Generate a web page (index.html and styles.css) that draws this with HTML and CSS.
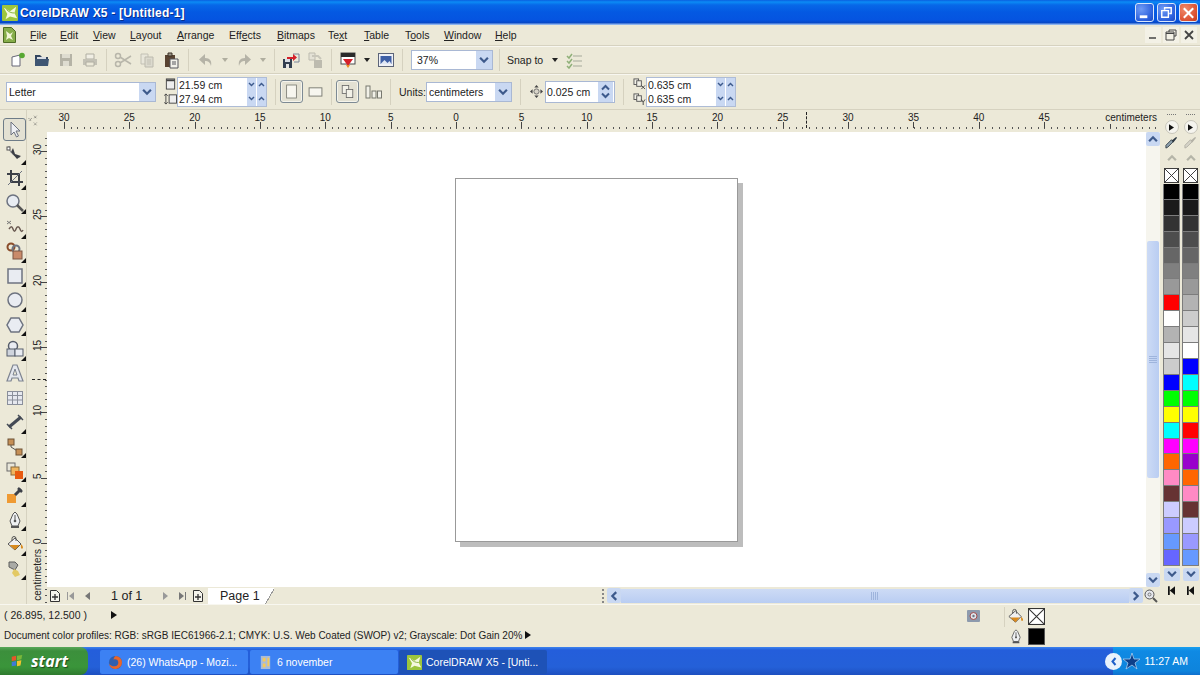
FILE: index.html
```html
<!DOCTYPE html>
<html lang="en">
<head>
  <meta charset="UTF-8" />
  <title>CorelDRAW X5 - [Untitled-1]</title>
  <link rel="stylesheet" href="styles.css">
</head>
<body>
  <svg class="defs" width="0" height="0">
    <symbol id="chev-d" viewBox="0 0 9 7"><path d="M1 1.500l3.500 3.500 3.500-3.500" fill="none" stroke="#3d5a8c" stroke-width="2"/></symbol>
    <symbol id="chev-u" viewBox="0 0 9 7"><path d="M1 5.500l3.500-3.500 3.500 3.500" fill="none" stroke="#3d5a8c" stroke-width="2"/></symbol>
    <symbol id="chev-l" viewBox="0 0 7 9"><path d="M5.500 1l-3.500 3.500 3.500 3.500" fill="none" stroke="#3d5a8c" stroke-width="2"/></symbol>
    <symbol id="chev-r" viewBox="0 0 7 9"><path d="M1.500 1l3.500 3.500-3.500 3.500" fill="none" stroke="#3d5a8c" stroke-width="2"/></symbol>
    <symbol id="cross" viewBox="0 0 16 16"><rect x=".5" y=".5" width="15" height="15" fill="#fff" stroke="#333"/><path d="M1 1l14 14M15 1L1 15" stroke="#333"/></symbol>
    <symbol id="bucket" viewBox="0 0 18 18"><path d="M2 9l7-6 6 6-6 6z" fill="#f0f0f0" stroke="#555"/><path d="M3.500 10h10L9 15z" fill="#d98a1e"/><path d="M6 6V3.500a2 2 0 0 1 4 0V6" fill="none" stroke="#555"/><path d="M15.500 9.500c1.500 2 2 3 1 4s-2-.5-1.500-4z" fill="#d98a1e"/></symbol>
    <symbol id="pen" viewBox="0 0 14 18"><path d="M7 1l2 2 3 7-2 5H4l-2-5 3-7z" fill="#eef0f2" stroke="#555"/><path d="M7 4v5" stroke="#555"/><circle cx="7" cy="10" r="1.300" fill="#555"/><path d="M3 16h8" stroke="#555" stroke-width="2"/></symbol>
    <symbol id="logo" viewBox="0 0 18 18"><rect width="18" height="18" rx="1" fill="#9cc53d"/><path d="M2 3l7 4 7-5-2 7 3 6-8-2-5 3 2-6z" fill="#f4f8dc"/><path d="M5 5c3 3 5 4 9 4" fill="none" stroke="#7dab2c"/></symbol>
  </svg>

  <header class="titlebar">
    <svg class="title-logo"><use href="#logo"/></svg>
    <span class="title-text">CorelDRAW X5 - [Untitled-1]</span>
    <div class="win-btns">
      <button class="win-btn"><svg viewBox="0 0 18 19"><rect x="4" y="12" width="8" height="3" fill="#fff"/></svg></button>
      <button class="win-btn"><svg viewBox="0 0 18 19"><path d="M7 6V4h7v6h-2M4 7h7v7H4z" fill="none" stroke="#fff" stroke-width="1.500"/></svg></button>
      <button class="win-btn close"><svg viewBox="0 0 18 19"><path d="M4 4.500l10 10M14 4.500l-10 10" stroke="#fff" stroke-width="2.200"/></svg></button>
    </div>
  </header>

  <nav class="menubar">
    <svg class="doc-icon" viewBox="0 0 13 16"><path d="M.5.5h8l4 4v11H.5z" fill="#86ad4a" stroke="#4d6b24"/><path d="M3 4l4 3 3-2-2 4 2 4-4-2-3 2 1-4z" fill="#f2f6d8"/></svg>
    <ul class="menu">
      <li class="m-file"><u>F</u>ile</li>
      <li class="m-edit"><u>E</u>dit</li>
      <li class="m-view"><u>V</u>iew</li>
      <li class="m-layout"><u>L</u>ayout</li>
      <li class="m-arrange"><u>A</u>rrange</li>
      <li class="m-effects">Eff<u>e</u>cts</li>
      <li class="m-bitmaps"><u>B</u>itmaps</li>
      <li class="m-text">Te<u>x</u>t</li>
      <li class="m-table"><u>T</u>able</li>
      <li class="m-tools">T<u>o</u>ols</li>
      <li class="m-window"><u>W</u>indow</li>
      <li class="m-help"><u>H</u>elp</li>
    </ul>
    <div class="doc-btns">
      <svg viewBox="0 0 16 16"><path d="M4 11h7" stroke="#444" stroke-width="1.500"/></svg>
      <svg viewBox="0 0 16 16"><path d="M6 5V3h7v6h-2M3 5h8v8H3zM3 6.500h8" fill="none" stroke="#444"/></svg>
      <svg viewBox="0 0 16 16"><path d="M4 4l8 8M12 4l-8 8" stroke="#444" stroke-width="1.800"/></svg>
    </div>
  </nav>

  <div class="toolbar">
    <span class="tb"><svg viewBox="0 0 18 18"><path d="M3 6l8-2v11H3z" fill="#fff" stroke="#667"/><circle cx="13" cy="4.500" r="2.800" fill="#58a832"/></svg></span>
    <span class="tb"><svg viewBox="0 0 18 18"><path d="M2 4h5l2 2h6v3H2z" fill="#33455e"/><path d="M2 8h14l-1 7H2z" fill="#3f5673"/><path d="M4 6h9v2H4z" fill="#d9dde3"/></svg></span>
    <span class="tb"><svg viewBox="0 0 18 18"><rect x="3" y="3" width="12" height="12" fill="#b5b3a6"/><rect x="5" y="3" width="8" height="4" fill="#dedcd0"/><rect x="6" y="10" width="6" height="5" fill="#dedcd0"/></svg></span>
    <span class="tb"><svg viewBox="0 0 18 18"><path d="M5 3h8v5H5z" fill="#f0eee4" stroke="#b0aea2"/><path d="M2 8h14v6H2z" fill="#c3c1b5"/><path d="M5 11h8v4H5z" fill="#ece9d8" stroke="#b0aea2"/></svg></span>
    <i class="sep"></i>
    <span class="tb"><svg viewBox="0 0 18 18"><circle cx="4" cy="5" r="2.500" fill="none" stroke="#b8b6aa" stroke-width="1.500"/><circle cx="4" cy="13" r="2.500" fill="none" stroke="#b8b6aa" stroke-width="1.500"/><path d="M6 6l11 7M6 12l11-7" stroke="#b8b6aa" stroke-width="1.500"/></svg></span>
    <span class="tb"><svg viewBox="0 0 18 18"><path d="M3 3h7v10H3z" fill="#e8e6da" stroke="#c2c0b4"/><path d="M7 6h8v10H7z" fill="#dcdace" stroke="#bcbaae"/><path d="M9 9h4M9 11h4M9 13h4" stroke="#c2c0b4"/></svg></span>
    <span class="tb"><svg viewBox="0 0 18 18"><path d="M3 4h10v12H3z" fill="#594331"/><path d="M6 2h4v3H6z" fill="#9b9588" stroke="#3d3024"/><path d="M8 8h8v9H8z" fill="#f2f1ea" stroke="#56575c"/><path d="M10 11h4M10 13h4" stroke="#56575c"/></svg></span>
    <i class="sep wide"></i>
    <span class="tb"><svg viewBox="0 0 18 18"><path d="M14 15c1-5-1-8-6-8V3L2 8.500 8 14v-4c3 0 5 1 6 5z" fill="#b5b3a7"/></svg></span>
    <span class="dd off"></span>
    <span class="tb"><svg viewBox="0 0 18 18"><path d="M4 15C3 10 5 7 10 7V3l6 5.500L10 14v-4c-3 0-5 1-6 5z" fill="#b5b3a7"/></svg></span>
    <span class="dd off"></span>
    <i class="sep"></i>
    <span class="tb"><svg viewBox="0 0 18 18"><rect x="1" y="8" width="9" height="9" fill="#333f50"/><rect x="3" y="8" width="5" height="3" fill="#d9dde3"/><rect x="4" y="13" width="3" height="4" fill="#e4e4e4"/><path d="M11 3h6v8h-5" fill="none" stroke="#7a8699"/><path d="M5 6h6V3l4 3.500-4 3.500V8H5z" fill="#d4202a"/></svg></span>
    <span class="tb"><svg viewBox="0 0 18 18"><path d="M3 2h6v7H3z" fill="#e4e2d6" stroke="#bdbbaf"/><rect x="8" y="9" width="8" height="8" fill="#bdbbaf"/><path d="M6 5h6l3 3" fill="none" stroke="#c8c6ba" stroke-width="2"/></svg></span>
    <i class="sep"></i>
    <span class="tb"><svg viewBox="0 0 18 18"><rect x="2" y="2" width="14" height="11" fill="#fff" stroke="#4a4a4a"/><rect x="2" y="2" width="14" height="4" fill="#2a2a2a"/><path d="M4 8h10l-5 7z" fill="#d5202a"/><path d="M7 14h4l-2 3z" fill="#ef8a1e"/></svg></span>
    <span class="dd"></span>
    <span class="tb"><svg viewBox="0 0 18 18"><rect x="1.500" y="2.500" width="15" height="13" fill="#eef0f6" stroke="#5c6478"/><rect x="3.500" y="5" width="11" height="8" fill="#3e5fa5"/><path d="M3.500 13l4-4 3 3 2-2 2 3z" fill="#dfe6f4"/></svg></span>
    <i class="sep before-zoom"></i>
    <div class="combo zoom-combo"><span>37%</span><b class="combo-btn"><svg><use href="#chev-d"/></svg></b></div>
    <i class="sep after-zoom"></i>
    <span class="snap">Snap to</span>
    <span class="dd snap-dd"></span>
    <span class="tb"><svg viewBox="0 0 18 18"><path d="M2 5l2 2 3-4M2 10l2 2 3-4M2 15l2 2 3-4" fill="none" stroke="#8fb078" stroke-width="1.500"/><path d="M8 5h9M8 10h9M8 15h9" stroke="#a5a99a"/></svg></span>
  </div>

  <div class="propbar">
    <div class="combo letter"><span>Letter</span><b class="combo-btn"><svg><use href="#chev-d"/></svg></b></div>
    <div class="size-icons">
      <svg viewBox="0 0 12 13"><rect x="1.500" y="1" width="9" height="11" fill="#eee" stroke="#444"/><path d="M1.500 2.500h9" stroke="#444" stroke-width="2"/></svg>
      <svg viewBox="0 0 14 13"><path d="M2 1v11" stroke="#444"/><path d="M0 3l2-2 2 2M0 10l2 2 2-2" fill="none" stroke="#444"/><rect x="5.500" y="2" width="8" height="9" fill="#eee" stroke="#444"/></svg>
    </div>
    <div class="spin-pair">
      <div class="spin-row"><span>21.59 cm</span><b><svg><use href="#chev-d"/></svg></b><b><svg><use href="#chev-u"/></svg></b></div>
      <div class="spin-row"><span>27.94 cm</span><b><svg><use href="#chev-d"/></svg></b><b><svg><use href="#chev-u"/></svg></b></div>
    </div>
    <i class="sep tall"></i>
    <span class="pb on"><svg viewBox="0 0 16 18"><rect x="2" y="1" width="12" height="16" fill="#f7f6ef" stroke="#77786f"/></svg></span>
    <span class="pb land"><svg viewBox="0 0 16 12"><rect x="1" y="2" width="14" height="9" fill="#f7f6ef" stroke="#77786f"/></svg></span>
    <i class="sep tall"></i>
    <span class="pb on"><svg viewBox="0 0 16 18"><rect x="1.500" y="1.500" width="8" height="10" fill="#f2f1e8" stroke="#666"/><rect x="6.500" y="6.500" width="8" height="10" fill="#f2f1e8" stroke="#666"/></svg></span>
    <span class="pb align"><svg viewBox="0 0 17 14"><rect x="1" y="1" width="4" height="12" fill="#f2f1e8" stroke="#77786f"/><rect x="7" y="6" width="4" height="7" fill="#f2f1e8" stroke="#77786f"/><rect x="12.500" y="6" width="4" height="7" fill="#f2f1e8" stroke="#77786f"/></svg></span>
    <i class="sep tall"></i>
    <label class="units-label">Units:</label>
    <div class="combo units"><span>centimeters</span><b class="combo-btn"><svg><use href="#chev-d"/></svg></b></div>
    <i class="sep tall"></i>
    <svg class="nudge" viewBox="0 0 15 15"><path d="M7.500 0l2.500 3H5zM7.500 15l2.500-3H5zM0 7.500L3 5v5zM15 7.500L12 5v5z" fill="#444"/><circle cx="7.500" cy="7.500" r="3" fill="#d8d4c8" stroke="#666"/></svg>
    <div class="nudge-box"><span>0.025 cm</span><b><svg><use href="#chev-u"/></svg><svg><use href="#chev-d"/></svg></b></div>
    <i class="sep tall"></i>
    <div class="size-icons dup-icons">
      <svg viewBox="0 0 14 13"><rect x="1" y="1" width="5" height="6" fill="#f2f1e8" stroke="#555"/><rect x="4" y="3" width="5" height="6" fill="#f2f1e8" stroke="#555"/><path d="M9 8l4 4M13 8l-4 4" stroke="#444"/></svg>
      <svg viewBox="0 0 14 13"><rect x="1" y="1" width="5" height="6" fill="#f2f1e8" stroke="#555"/><rect x="4" y="3" width="5" height="6" fill="#f2f1e8" stroke="#555"/><path d="M9 7l2 3 2-3M11 10v3" fill="none" stroke="#444"/></svg>
    </div>
    <div class="spin-pair">
      <div class="spin-row"><span>0.635 cm</span><b><svg><use href="#chev-d"/></svg></b><b><svg><use href="#chev-u"/></svg></b></div>
      <div class="spin-row"><span>0.635 cm</span><b><svg><use href="#chev-d"/></svg></b><b><svg><use href="#chev-u"/></svg></b></div>
    </div>
  </div>

  <main class="workspace">
    <aside class="toolbox">
      <span class="tool selected"><svg viewBox="0 0 18 18"><path d="M5 1v13l3-3 2.500 5 2-1-2.500-5h4z" fill="#eef0f4" stroke="#6d7380"/></svg></span>
      <span class="tool fly"><svg viewBox="0 0 18 18"><path d="M3 1c0 6 4 10 11 11" fill="none" stroke="#7d8088"/><path d="M7 3l2 6 6 2-4 3-6-7z" fill="#3a3d44"/><rect x="1" y="2" width="3" height="3" fill="#fff" stroke="#555"/></svg></span>
      <span class="tool fly"><svg viewBox="0 0 18 18"><path d="M5 1v12h12M1 5h12v12" fill="none" stroke="#3c4048" stroke-width="2"/><path d="M2 16L16 2" stroke="#6d7380"/></svg></span>
      <span class="tool fly"><svg viewBox="0 0 18 18"><circle cx="7" cy="7" r="6" fill="#e8ecf2" stroke="#6d7380" stroke-width="1.500"/><path d="M11 11l6 6" stroke="#555" stroke-width="2.500"/></svg></span>
      <span class="tool fly"><svg viewBox="0 0 18 18"><path d="M1 3l4 3M5 3L1 6" stroke="#777"/><path d="M3 11c2-3 3-3 4 0s2 3 3 0 3-3 4 0 2 3 3 1" fill="none" stroke="#6a5a52" stroke-width="1.500"/></svg></span>
      <span class="tool fly"><svg viewBox="0 0 18 18"><circle cx="5" cy="5" r="3.500" fill="none" stroke="#8a4c2a" stroke-width="2"/><circle cx="10" cy="7" r="3.500" fill="none" stroke="#6d7380" stroke-width="2"/><rect x="7" y="9" width="9" height="8" fill="#c98a6a" stroke="#7a5644"/></svg></span>
      <span class="tool fly"><svg viewBox="0 0 18 18"><rect x="2" y="2" width="14" height="14" fill="#e9ecf2" stroke="#6d7380" stroke-width="1.500"/></svg></span>
      <span class="tool fly"><svg viewBox="0 0 18 18"><circle cx="9" cy="9" r="7" fill="#e9ecf2" stroke="#6d7380" stroke-width="1.500"/></svg></span>
      <span class="tool fly"><svg viewBox="0 0 18 18"><path d="M5 2h8l4 7-4 7H5L1 9z" fill="#e9ecf2" stroke="#6d7380" stroke-width="1.500"/></svg></span>
      <span class="tool fly"><svg viewBox="0 0 18 18"><circle cx="7" cy="6" r="4.500" fill="#e9ecf2" stroke="#555c6a" stroke-width="1.500"/><rect x="1" y="9" width="8" height="7" fill="#cfd4dd" stroke="#555c6a"/><rect x="9" y="9" width="8" height="7" fill="#e9ecf2" stroke="#555c6a"/></svg></span>
      <span class="tool"><svg viewBox="0 0 18 18"><path d="M7 1h4l6 16h-4l-1-3H6l-1 3H1z" fill="#e4e7ee" stroke="#7d8390" stroke-width="1.200"/><path d="M9 5l2 6H7z" fill="#ece9d8" stroke="#7d8390"/></svg></span>
      <span class="tool"><svg viewBox="0 0 18 18"><rect x="1.500" y="2.500" width="15" height="13" fill="#e6e8ef" stroke="#8a8f9b"/><path d="M1.500 6.500h15M1.500 11h15M6.500 2.500v13M11.500 2.500v13" stroke="#8a8f9b"/></svg></span>
      <span class="tool fly"><svg viewBox="0 0 18 18"><path d="M3 14L15 4" stroke="#444a55" stroke-width="3"/><path d="M1 11l5 5M12 2l5 5" stroke="#444a55" stroke-width="1.500"/></svg></span>
      <span class="tool fly"><svg viewBox="0 0 18 18"><path d="M5 5v4l8 5" fill="none" stroke="#555"/><rect x="2" y="1" width="6" height="6" fill="#c58f56" stroke="#6c5236"/><rect x="10" y="11" width="6" height="6" fill="#c58f56" stroke="#6c5236"/></svg></span>
      <span class="tool fly"><svg viewBox="0 0 18 18"><rect x="1" y="1" width="8" height="8" fill="#e8e6da" stroke="#6a6a6a"/><rect x="5" y="5" width="8" height="8" fill="#efb55f" stroke="#8a6a3a"/><rect x="9" y="9" width="8" height="8" fill="#e85a10"/></svg></span>
      <span class="tool fly"><svg viewBox="0 0 18 18"><rect x="1" y="8" width="9" height="9" fill="#ef9a32"/><path d="M9 9l6-6" stroke="#3c4048" stroke-width="3"/><path d="M12 2l4 4" stroke="#3c4048" stroke-width="2.500"/></svg></span>
      <span class="tool fly"><svg viewBox="0 0 14 18"><use href="#pen"/></svg></span>
      <span class="tool fly"><svg viewBox="0 0 18 18"><use href="#bucket"/></svg></span>
      <span class="tool fly"><svg viewBox="0 0 18 18"><path d="M3 2h6l3 3-3 5-6-3z" fill="#a9aaa5" stroke="#5c5c5c"/><path d="M8 9l4 2 2 4-5 2-3-4z" fill="#e3c964"/></svg></span>
    </aside>

    <div class="center">
      <div class="ruler-top">
        <svg class="corner" viewBox="0 0 14 14"><path d="M1 4l3 3M4 4L1 7M7 1l3 3M10 1L7 4M7 9l3 3M10 9l-3 3" stroke="#444" stroke-dasharray="1 1"/></svg>
        <div class="ticks-h">
          <span><b>30</b></span><span><b>25</b></span><span><b>20</b></span><span><b>15</b></span><span><b>10</b></span><span><b>5</b></span><span><b>0</b></span><span><b>5</b></span><span><b>10</b></span><span><b>15</b></span><span><b>20</b></span><span><b>25</b></span><span><b>30</b></span><span><b>35</b></span><span><b>40</b></span><span><b>45</b></span><span></span>
          <em class="ruler-unit">centimeters</em>
          <i class="guide-h"></i>
        </div>
      </div>
      <div class="middle">
        <div class="ruler-left">
          <span><b>30</b></span><span><b>25</b></span><span><b>20</b></span><span><b>15</b></span><span><b>10</b></span><span><b>5</b></span><span><b>0</b></span>
          <em class="ruler-unit-v">centimeters</em>
          <i class="guide-v"></i>
        </div>
        <div class="doc-area">
          <div class="doc-top">
            <div class="canvas"><div class="page"></div></div>
            <div class="vscroll">
              <b class="sb-btn"><svg><use href="#chev-u"/></svg></b>
              <div class="vtrack"><div class="vthumb"><i></i></div></div>
              <b class="sb-btn"><svg><use href="#chev-d"/></svg></b>
            </div>
          </div>
          <div class="doc-bottom">
            <svg class="pg-icon" viewBox="0 0 10 12"><path d="M.5.5h6l3 3v8h-9z" fill="#f5f4ec" stroke="#333"/><path d="M5 4v6M2 7h6" stroke="#333" stroke-width="1.300"/></svg>
            <svg class="pg-nav" viewBox="0 0 10 10"><path d="M1.500 1v8" stroke="#999"/><path d="M8 1L3 5l5 4z" fill="#999"/></svg>
            <svg class="pg-nav" viewBox="0 0 10 10"><path d="M8 1L3 5l5 4z" fill="#777"/></svg>
            <span class="pg-count">1 of 1</span>
            <svg class="pg-nav" viewBox="0 0 10 10"><path d="M2 1l5 4-5 4z" fill="#999"/></svg>
            <svg class="pg-nav" viewBox="0 0 10 10"><path d="M2 1l5 4-5 4z" fill="#777"/><path d="M8.500 1v8" stroke="#777"/></svg>
            <svg class="pg-icon" viewBox="0 0 10 12"><path d="M.5.5h6l3 3v8h-9z" fill="#f5f4ec" stroke="#333"/><path d="M5 4v6M2 7h6" stroke="#333" stroke-width="1.300"/></svg>
            <span class="page-tab">Page 1</span>
            <i class="hgrip"></i>
            <b class="sb-btn h"><svg><use href="#chev-l"/></svg></b>
            <div class="hthumb"><i></i></div>
            <b class="sb-btn h"><svg><use href="#chev-r"/></svg></b>
            <svg class="zoom-fit" viewBox="0 0 14 14"><circle cx="5.500" cy="5.500" r="4.500" fill="#e6e8ee" stroke="#555"/><circle cx="5.500" cy="5.500" r="1.500" fill="none" stroke="#777"/><path d="M9 9l4 4" stroke="#555" stroke-width="2"/></svg>
          </div>
        </div>
      </div>
    </div>

    <aside class="palettes">
      <div class="palette">
        <i class="grip"></i>
        <b class="play"><svg viewBox="0 0 6 8"><path d="M0 0l6 4-6 4z" fill="#111"/></svg></b>
        <svg class="dropper" viewBox="0 0 14 14"><path d="M1 13l2-1 6-6-2-2-6 6z" fill="#8ea1ad" stroke="#36424c"/><path d="M7 5l5-4 1 1-4 5z" fill="#2b3640"/></svg>
        <svg class="pal-up" viewBox="0 0 9 7"><path d="M1 5.500l3.500-3.500 3.500 3.500" fill="none" stroke="#b5b5a8" stroke-width="2"/></svg>
        <svg class="no-fill"><use href="#cross"/></svg>
        <div class="swatches">
          <i class="k100"></i><i class="k90"></i><i class="k80"></i><i class="k70"></i><i class="k60"></i><i class="k50"></i><i class="k40"></i><i class="red"></i><i class="white"></i><i class="k30"></i><i class="k10"></i><i class="k20"></i><i class="blue"></i><i class="green"></i><i class="yellow"></i><i class="cyan"></i><i class="magenta"></i><i class="orange"></i><i class="pink"></i><i class="brown"></i><i class="lav"></i><i class="peri"></i><i class="sky"></i><i class="slate"></i>
        </div>
        <b class="sb-btn pal"><svg><use href="#chev-d"/></svg></b>
        <svg class="first" viewBox="0 0 8 10"><path d="M1 0v10" stroke="#111" stroke-width="2"/><path d="M8 0L2 5l6 5z" fill="#111"/></svg>
      </div>
      <div class="palette">
        <i class="grip"></i>
        <b class="play"><svg viewBox="0 0 6 8"><path d="M0 0l6 4-6 4z" fill="#111"/></svg></b>
        <svg class="dropper" viewBox="0 0 14 14"><path d="M1 13l2-1 6-6-2-2-6 6z" fill="#d5d3c8" stroke="#b3b1a6"/><path d="M7 5l5-4 1 1-4 5z" fill="#b3b1a6"/></svg>
        <svg class="pal-up" viewBox="0 0 9 7"><path d="M1 5.500l3.500-3.500 3.500 3.500" fill="none" stroke="#b5b5a8" stroke-width="2"/></svg>
        <svg class="no-fill"><use href="#cross"/></svg>
        <div class="swatches">
          <i class="k100"></i><i class="k90"></i><i class="k80"></i><i class="k70"></i><i class="k60"></i><i class="k50"></i><i class="k40"></i><i class="k30"></i><i class="k20"></i><i class="k10"></i><i class="white"></i><i class="blue"></i><i class="cyan"></i><i class="green"></i><i class="yellow"></i><i class="red"></i><i class="magenta"></i><i class="purple"></i><i class="orange"></i><i class="pink"></i><i class="brown"></i><i class="lav"></i><i class="peri"></i><i class="sky"></i>
        </div>
        <b class="sb-btn pal"><svg><use href="#chev-d"/></svg></b>
        <svg class="first" viewBox="0 0 8 10"><path d="M1 0v10" stroke="#111" stroke-width="2"/><path d="M8 0L2 5l6 5z" fill="#111"/></svg>
      </div>
    </aside>
  </main>

  <section class="statusbar">
    <div class="status-left">
      <div class="status-row coords"><span class="coord-text">( 26.895, 12.500 )</span><i class="tri"></i></div>
      <div class="status-row"><span class="profile-text">Document color profiles: RGB: sRGB IEC61966-2.1; CMYK: U.S. Web Coated (SWOP) v2; Grayscale: Dot Gain 20%</span><i class="tri"></i></div>
    </div>
    <svg class="cam" viewBox="0 0 15 15"><rect x="1" y="1" width="13" height="12" rx="1" fill="#8d9aad"/><circle cx="7.500" cy="7" r="3.500" fill="#dfe3ea" stroke="#a34c4c"/><circle cx="7.500" cy="7" r="1.200" fill="#6a7485"/></svg>
    <i class="status-sep"></i>
    <div class="fill-grid">
      <svg class="fill-icon"><use href="#bucket"/></svg>
      <svg class="fill-swatch"><use href="#cross"/></svg>
      <svg class="pen-icon" viewBox="0 0 14 18"><use href="#pen"/></svg>
      <i class="outline-swatch"></i>
    </div>
  </section>

  <footer class="taskbar">
    <div class="start">
      <svg viewBox="0 0 16 16"><path d="M2 3l5-1v5l-5 1z" fill="#e8552a"/><path d="M8 2l6-1-1 5-5 1z" fill="#7ab83a"/><path d="M2 9l5-1v5l-5 1z" fill="#3f7ad8"/><path d="M8 8l5-1-1 6-4 1z" fill="#f2c42e"/></svg>
      <span>start</span>
    </div>
    <div class="task">
      <svg viewBox="0 0 16 16"><circle cx="8" cy="8" r="7" fill="#2f5fb0"/><path d="M8 1a7 7 0 1 1-7 8c1 2 3 3 6 3 3 0 4-2 4-4 0-3-3-4-5-3 0-2 1-3 2-4z" fill="#e8662a"/></svg>
      <span>(26) WhatsApp - Mozi...</span>
    </div>
    <div class="task">
      <svg viewBox="0 0 16 16"><path d="M3 1h10v14H3z" fill="#a9bcd8"/><path d="M5 3h3v4H5zM10 3h2v9h-2zM5 9h3v4H5z" fill="#f4c95a"/></svg>
      <span>6 november</span>
    </div>
    <div class="task active">
      <svg><use href="#logo"/></svg>
      <span>CorelDRAW X5 - [Unti...</span>
    </div>
    <div class="tray">
      <b class="tray-btn"><svg viewBox="0 0 8 9"><path d="M5.500 1L2.500 4.500 5.500 8" fill="none" stroke="#1e5fc8" stroke-width="2"/></svg></b>
      <svg class="tray-star" viewBox="0 0 18 18"><path d="M10 1l2 6 6 0-5 4 2 6-5-4-6 4 2-6-5-4h7z" fill="#0d3f8a" stroke="#b9d9f5" stroke-width=".7"/></svg>
      <span>11:27 AM</span>
    </div>
  </footer>
</body>
</html>
```

FILE: styles.css
```css
:root {
  --face: #ece9d8;
  --line: #d6d2c0;
  --btn: #c9d8f2;
  --text: #222;
}

* {
  box-sizing: border-box;
}

html, body {
  margin: 0;
  height: 675px;
  overflow: hidden;
}

body {
  display: flex;
  flex-direction: column;
  width: 1200px;
  background: var(--face);
  color: var(--text);
  font-family: "Liberation Sans", sans-serif;
  font-size: 10.500px;
}

.defs {
  position: absolute;
}

svg {
  display: block;
  flex: none;
}

i, b, em {
  font-style: normal;
  font-weight: normal;
}

/* title bar */
.titlebar {
  flex: 0 0 25px;
  display: flex;
  align-items: center;
  padding: 0 2px;
  background: linear-gradient(#0a5fe0 0, #0b8bf5 2px, #0768e8 5px, #0459e2 12px, #0554e0 20px, #0746c4 23px, #8db4ee 24px);
}

.title-logo {
  width: 16px;
  height: 16px;
  margin-right: 2px;
}

.title-text {
  color: #fff;
  font-weight: 700;
  font-size: 12px;
  letter-spacing: .2px;
  text-shadow: 1px 1px 0 #0a2f8c;
}

.win-btns {
  margin-left: auto;
  display: flex;
  gap: 3px;
}

.win-btn {
  width: 19px;
  height: 19px;
  padding: 0;
  border: 1px solid #d9e6fb;
  border-radius: 3px;
  background: radial-gradient(circle at 30% 30%, #6f9bf5, #2a5fdc 70%, #1c49c2);
}

.win-btn.close {
  background: radial-gradient(circle at 30% 30%, #f08a6a, #dc5030 70%, #c23a1c);
}

/* menu */
.menubar {
  flex: 0 0 21px;
  display: flex;
  align-items: center;
  padding-left: 3px;
  border-bottom: 1px solid var(--line);
}

.doc-icon {
  width: 13px;
  height: 16px;
}

.menu {
  display: flex;
  list-style: none;
  margin: 0 0 0 14px;
  padding: 0;
  line-height: 16px;
}

.m-file { width: 30px; }
.m-edit { width: 33px; }
.m-view { width: 37px; }
.m-layout { width: 47px; }
.m-arrange { width: 52px; }
.m-effects { width: 48px; }
.m-bitmaps { width: 51px; }
.m-text { width: 36px; }
.m-table { width: 41px; }
.m-tools { width: 39px; }
.m-window { width: 51px; }

.doc-btns {
  margin-left: auto;
  margin-right: 3px;
  display: flex;
  gap: 2px;
}

.doc-btns svg {
  width: 16px;
  height: 16px;
  background: #f3f1e6;
}

/* toolbars */
.toolbar {
  flex: 0 0 28px;
  display: flex;
  align-items: center;
  padding-left: 6px;
  border-bottom: 1px solid var(--line);
  box-shadow: inset 0 1px 0 #f8f7f0;
}

.tb {
  width: 24px;
  height: 24px;
  display: flex;
  align-items: center;
  justify-content: center;
}

.tb svg {
  width: 18px;
  height: 18px;
}

.sep {
  width: 1px;
  height: 22px;
  margin: 0 4px;
  background: #d5d1bf;
}

.sep.wide { margin: 0 5px; }
.sep.before-zoom { margin-right: 8px; }
.sep.after-zoom { margin-left: 6px; }

.dd {
  width: 14px;
  display: flex;
  justify-content: center;
}

.dd::before {
  content: "";
  border: 3px solid transparent;
  border-top: 4px solid #222;
  border-bottom: 0;
}

.dd.off::before {
  border-top-color: #b0ae9f;
}

.combo {
  height: 20px;
  display: flex;
  align-items: center;
  background: #fff;
  border: 1px solid #a9b8d4;
  padding-left: 2px;
}

.combo span {
  flex: 1;
}

.combo-btn {
  width: 16px;
  height: 18px;
  display: flex;
  align-items: center;
  justify-content: center;
  background: var(--btn);
}

.combo-btn svg {
  width: 10px;
  height: 8px;
}

.zoom-combo {
  width: 82px;
  padding-left: 5px;
}

.snap {
  margin-left: 3px;
  width: 37px;
  white-space: nowrap;
}

.snap-dd {
  margin-left: 4px;
}

.propbar {
  flex: 0 0 36px;
  display: flex;
  align-items: center;
  padding-left: 6px;
  border-bottom: 1px solid var(--line);
  box-shadow: inset 0 1px 0 #f8f7f0;
}

.letter {
  width: 150px;
}

.size-icons {
  width: 15px;
  margin-left: 6px;
  display: flex;
  flex-direction: column;
  gap: 3px;
  align-items: flex-end;
}

.size-icons svg {
  width: 13px;
  height: 12px;
}

.spin-pair {
  width: 90px;
  height: 30px;
  border: 1px solid #aebcd6;
  background: #fff;
}

.spin-row {
  height: 14px;
  display: flex;
  align-items: center;
  padding-left: 1px;
}

.spin-row span {
  flex: 1;
  line-height: 14px;
}

.spin-row b {
  width: 9px;
  height: 14px;
  margin-left: 1px;
  background: var(--btn);
  display: flex;
  align-items: center;
  justify-content: center;
}

.spin-row svg {
  width: 7px;
  height: 5px;
}

.sep.tall {
  height: 26px;
  margin: 0 4px 0 8px;
}

.pb {
  display: flex;
  align-items: center;
  justify-content: center;
}

.pb.on {
  width: 23px;
  height: 23px;
  border: 1px solid #7d8a94;
  border-radius: 3px;
  background: #e3e1d3;
  box-shadow: inset 0 0 0 1px #f5f4ec;
}

.pb svg {
  width: 13px;
  height: 15px;
}

.pb.land {
  width: 15px;
  margin-left: 5px;
}

.pb.land svg {
  width: 15px;
  height: 11px;
}

.pb.align {
  margin-left: 6px;
  width: 17px;
}

.pb.align svg {
  width: 17px;
  height: 14px;
}

.units-label {
  margin-left: 4px;
  width: 26px;
}

.units {
  width: 86px;
  margin-left: 1px;
}

.nudge {
  width: 13px;
  height: 13px;
  margin-left: 5px;
}

.nudge-box {
  width: 70px;
  height: 22px;
  margin-left: 2px;
  display: flex;
  align-items: center;
  background: #fff;
  border: 1px solid #a9b8d4;
  padding-left: 1px;
}

.nudge-box span {
  flex: 1;
}

.nudge-box b {
  width: 15px;
  height: 20px;
  margin-right: 1px;
  background: var(--btn);
  display: flex;
  flex-direction: column;
  align-items: center;
  justify-content: center;
  gap: 1px;
}

.nudge-box svg {
  width: 9px;
  height: 7px;
}

.dup-icons {
  margin-left: 3px;
}

/* workspace */
.workspace {
  flex: 0 0 494px;
  display: flex;
  min-height: 0;
}

.toolbox {
  flex: 0 0 27px;
  padding: 8px 0 0 3px;
  display: flex;
  flex-direction: column;
  gap: 1.400px;
  border-right: 1px solid var(--line);
}

.tool {
  position: relative;
  width: 23px;
  height: 23px;
  display: flex;
  align-items: center;
  justify-content: center;
}

.tool svg {
  width: 18px;
  height: 18px;
}

.tool.selected {
  border: 1px solid #6e7c88;
  border-radius: 3px;
  background: #e3e1d3;
}

.tool.fly::after {
  content: "";
  position: absolute;
  right: 0;
  bottom: 0;
  border-style: solid;
  border-width: 0 0 5px 5px;
  border-color: transparent transparent #111 transparent;
}

.center {
  flex: 0 0 1133px;
  display: flex;
  flex-direction: column;
  min-width: 0;
}

.ruler-top {
  flex: 0 0 22px;
  display: flex;
}

.corner {
  width: 20px;
  height: 22px;
  padding: 5px 6px 5px 0;
}

.ticks-h {
  flex: 1;
  min-width: 0;
  overflow: hidden;
  position: relative;
  display: flex;
  padding-left: 17px;
  background: repeating-linear-gradient(90deg, #555 0, #555 1px, transparent 1px, transparent 6.535px) 17px 17px / 100% 2px no-repeat;
}

.ticks-h span {
  flex: 0 0 65.350px;
  height: 100%;
  position: relative;
  font-size: 10px;
  line-height: 12px;
  padding-top: 2px;
}

.ticks-h span::before {
  content: "";
  position: absolute;
  left: 0;
  top: 12px;
  width: 1px;
  height: 6px;
  background: #444;
}

.ticks-h b {
  display: block;
  width: 20px;
  margin-left: -10px;
  text-align: center;
}

.ruler-unit {
  position: absolute;
  right: 3px;
  top: 2px;
  font-size: 10px;
  line-height: 12px;
  background: var(--face);
}

.guide-h {
  position: absolute;
  left: 759px;
  top: 2px;
  height: 16px;
  border-left: 1px dashed #222;
}

.middle {
  flex: 1;
  display: flex;
  min-height: 0;
}

.ruler-left {
  flex: 0 0 20px;
  position: relative;
  display: flex;
  flex-direction: column;
  padding-top: 19px;
  background: repeating-linear-gradient(180deg, #555 0, #555 1px, transparent 1px, transparent 6.535px) 18px 6px / 2px 100% no-repeat;
}

.ruler-left span {
  flex: 0 0 65.350px;
  position: relative;
  font-size: 10px;
  line-height: 12px;
}

.ruler-left span::before {
  content: "";
  position: absolute;
  right: 0;
  top: 0;
  width: 6px;
  height: 1px;
  background: #444;
}

.ruler-left b {
  display: block;
  width: 12px;
  height: 20px;
  margin: -12px 0 0 5px;
  text-align: center;
  writing-mode: vertical-rl;
  transform: rotate(180deg);
}

.ruler-unit-v {
  position: absolute;
  left: 5px;
  bottom: 3px;
  writing-mode: vertical-rl;
  transform: rotate(180deg);
  font-size: 10px;
  line-height: 12px;
  background: var(--face);
}

.guide-v {
  position: absolute;
  left: 5px;
  top: 247px;
  width: 14px;
  border-top: 1px dashed #222;
}

.doc-area {
  flex: 1;
  display: flex;
  flex-direction: column;
  min-width: 0;
}

.doc-top {
  flex: 1;
  display: flex;
  min-height: 0;
}

.canvas {
  flex: 1;
  background: #fff;
  padding: 46px 0 0 408px;
}

.page {
  width: 283px;
  height: 364px;
  background: #fff;
  border: 1px solid #999;
  box-shadow: 5px 5px 0 #bdbdbd;
}

.vscroll {
  flex: 0 0 14px;
  display: flex;
  flex-direction: column;
  background: #f6f5ee;
}

.sb-btn {
  flex: 0 0 14px;
  display: flex;
  align-items: center;
  justify-content: center;
  background: var(--btn);
  border-radius: 2px;
}

.sb-btn svg {
  width: 10px;
  height: 8px;
}

.vtrack {
  flex: 1;
  padding: 95px 0;
}

.vthumb {
  height: 100%;
  margin: 0 1px;
  background: linear-gradient(90deg, #cddbf5, #b9cdf2);
  border-radius: 2px;
  display: flex;
  align-items: center;
  justify-content: center;
}

.vthumb i {
  width: 8px;
  height: 8px;
  background: repeating-linear-gradient(#9eb4dc 0, #9eb4dc 1px, transparent 1px, transparent 2px);
}

.doc-bottom {
  flex: 0 0 17px;
  display: flex;
  align-items: center;
  background: var(--face);
  padding-left: 3px;
}

.pg-icon {
  width: 10px;
  height: 12px;
}

.pg-nav {
  width: 10px;
  height: 10px;
  margin-left: 6px;
}

.pg-count {
  width: 69px;
  padding-left: 19px;
  font-size: 12.500px;
  white-space: nowrap;
}

.pg-count + .pg-nav {
  margin-left: 0;
}

.pg-nav + .pg-icon {
  margin-left: 6px;
}

.page-tab {
  flex: none;
  width: 66px;
  height: 16px;
  margin-left: 5px;
  padding-left: 12px;
  background: linear-gradient(-60deg, var(--face) 7px, #999 7px, #999 8px, #fff 8px);
  font-size: 12.500px;
  line-height: 16px;
}

.hgrip {
  width: 3px;
  height: 14px;
  margin-left: 328px;
  border-left: 2px dotted #888;
}

.sb-btn.h {
  height: 15px;
  margin-left: 2px;
}

.sb-btn.h svg {
  width: 8px;
  height: 10px;
}

.hthumb + .sb-btn.h {
  margin-left: 0;
}

.hthumb {
  flex: none;
  width: 508px;
  height: 14px;
  background: linear-gradient(#cddbf5, #b9cdf2);
  display: flex;
  align-items: center;
  justify-content: center;
}

.hthumb i {
  width: 8px;
  height: 8px;
  background: repeating-linear-gradient(90deg, #9eb4dc 0, #9eb4dc 1px, transparent 1px, transparent 2px);
}

.zoom-fit {
  width: 14px;
  height: 14px;
  margin-left: 1px;
}

/* colour palettes */
.palettes {
  flex: 0 0 40px;
  display: flex;
  gap: 2px;
  padding-left: 3px;
}

.palette {
  width: 17px;
  display: flex;
  flex-direction: column;
  align-items: center;
}

.grip {
  width: 9px;
  height: 6px;
  margin-top: 4px;
  border-top: 1px dotted #777;
}

.play {
  width: 14px;
  height: 14px;
  border-radius: 50%;
  background: #f5f4ee;
  border: 1px solid #c8c6ba;
  display: flex;
  align-items: center;
  justify-content: center;
}

.play svg {
  width: 5px;
  height: 7px;
}

.dropper {
  width: 13px;
  height: 13px;
  margin-top: 2px;
}

.pal-up {
  width: 10px;
  height: 8px;
  margin: 5px 0 6px;
}

.no-fill {
  width: 15px;
  height: 15px;
}

.swatches {
  margin-top: 1px;
  width: 17px;
  display: flex;
  flex-direction: column;
}

.swatches i {
  height: 15.920px;
  border: 1px solid #7c7c7c;
  border-width: 0 1px 1px;
}

.sb-btn.pal {
  flex: 0 0 13px;
  width: 16px;
  margin-top: 2px;
}

.first {
  width: 7px;
  height: 9px;
  margin-top: 5px;
}

.k100 { background: #000; }
.k90 { background: #1a1a1a; }
.k80 { background: #333; }
.k70 { background: #4d4d4d; }
.k60 { background: #666; }
.k50 { background: #808080; }
.k40 { background: #999; }
.k30 { background: #b3b3b3; }
.k20 { background: #ccc; }
.k10 { background: #e5e5e5; }
.white { background: #fff; }
.red { background: #f00; }
.blue { background: #00f; }
.green { background: #0f0; }
.yellow { background: #ff0; }
.cyan { background: #0ff; }
.magenta { background: #f0f; }
.orange { background: #f60; }
.pink { background: #ff8ac4; }
.brown { background: #663333; }
.lav { background: #ccf; }
.peri { background: #99f; }
.sky { background: #69f; }
.slate { background: #66f; }
.purple { background: #90c; }

/* status bar */
.statusbar {
  flex: 0 0 43px;
  display: flex;
  align-items: flex-start;
  box-shadow: inset 0 1px 0 #f8f7f0;
}

.status-left {
  flex: 0 0 966px;
  padding: 1px 0 0 4px;
}

.status-row {
  height: 20px;
  display: flex;
  align-items: center;
  white-space: nowrap;
}

.coord-text {
  width: 107px;
}

.profile-text {
  width: 521px;
  font-size: 10px;
}

.tri {
  border: 4px solid transparent;
  border-left: 6px solid #111;
  border-right: 0;
}

.cam {
  width: 15px;
  height: 15px;
  margin-top: 5px;
}

.status-sep {
  width: 1px;
  height: 20px;
  margin: 3px 0 0 23px;
  background: var(--line);
}

.fill-grid {
  margin: 4px 0 0 2px;
  display: grid;
  grid-template-columns: 18px 17px;
  grid-auto-rows: 17px;
  gap: 3px;
}

.fill-icon,
.fill-swatch {
  width: 17px;
  height: 17px;
}

.pen-icon {
  width: 12px;
  height: 15px;
  margin: 1px 0 0 3px;
}

.outline-swatch {
  background: #000;
  border: 1px solid #555;
}

/* taskbar */
.taskbar {
  flex: 0 0 28px;
  display: flex;
  align-items: stretch;
  color: #fff;
  background: linear-gradient(#3d84ee 0, #245edb 3px, #2460d8 20px, #1d4fc0 28px);
}

.start {
  width: 88px;
  display: flex;
  align-items: center;
  padding-left: 10px;
  gap: 7px;
  border-radius: 0 8px 8px 0;
  background: linear-gradient(#5aa85a 0, #3c8f3c 4px, #3a953a 20px, #2f7a2f 28px);
}

.start svg {
  width: 14px;
  height: 14px;
}

.start span {
  font-family: "Open Sans", sans-serif;
  font-size: 16px;
  font-weight: 700;
  font-style: italic;
  text-shadow: 1px 1px 1px #1c4a1c;
}

.task {
  width: 148px;
  margin: 3px 0 1px 2px;
  display: flex;
  align-items: center;
  gap: 4px;
  padding-left: 8px;
  background: #3c81f3;
  border-radius: 2px;
  white-space: nowrap;
}

.start + .task {
  margin-left: 12px;
}

.task svg {
  width: 15px;
  height: 15px;
}

.task.active {
  background: #1e52b7;
  margin-left: 1px;
}

.tray {
  margin-left: auto;
  width: 87px;
  display: flex;
  align-items: center;
  padding-right: 12px;
  justify-content: flex-end;
  position: relative;
  background: linear-gradient(#18a0ef 0, #0f8ae4 4px, #0e84dc 24px, #0f6fce 28px);
}

.tray-btn {
  position: absolute;
  left: -8px;
  top: 6px;
  width: 17px;
  height: 17px;
  border-radius: 50%;
  background: #e9f2fc;
  display: flex;
  align-items: center;
  justify-content: center;
}

.tray-btn svg {
  width: 8px;
  height: 9px;
}

.tray-star {
  position: absolute;
  left: 9px;
  top: 5px;
  width: 18px;
  height: 18px;
}
```
